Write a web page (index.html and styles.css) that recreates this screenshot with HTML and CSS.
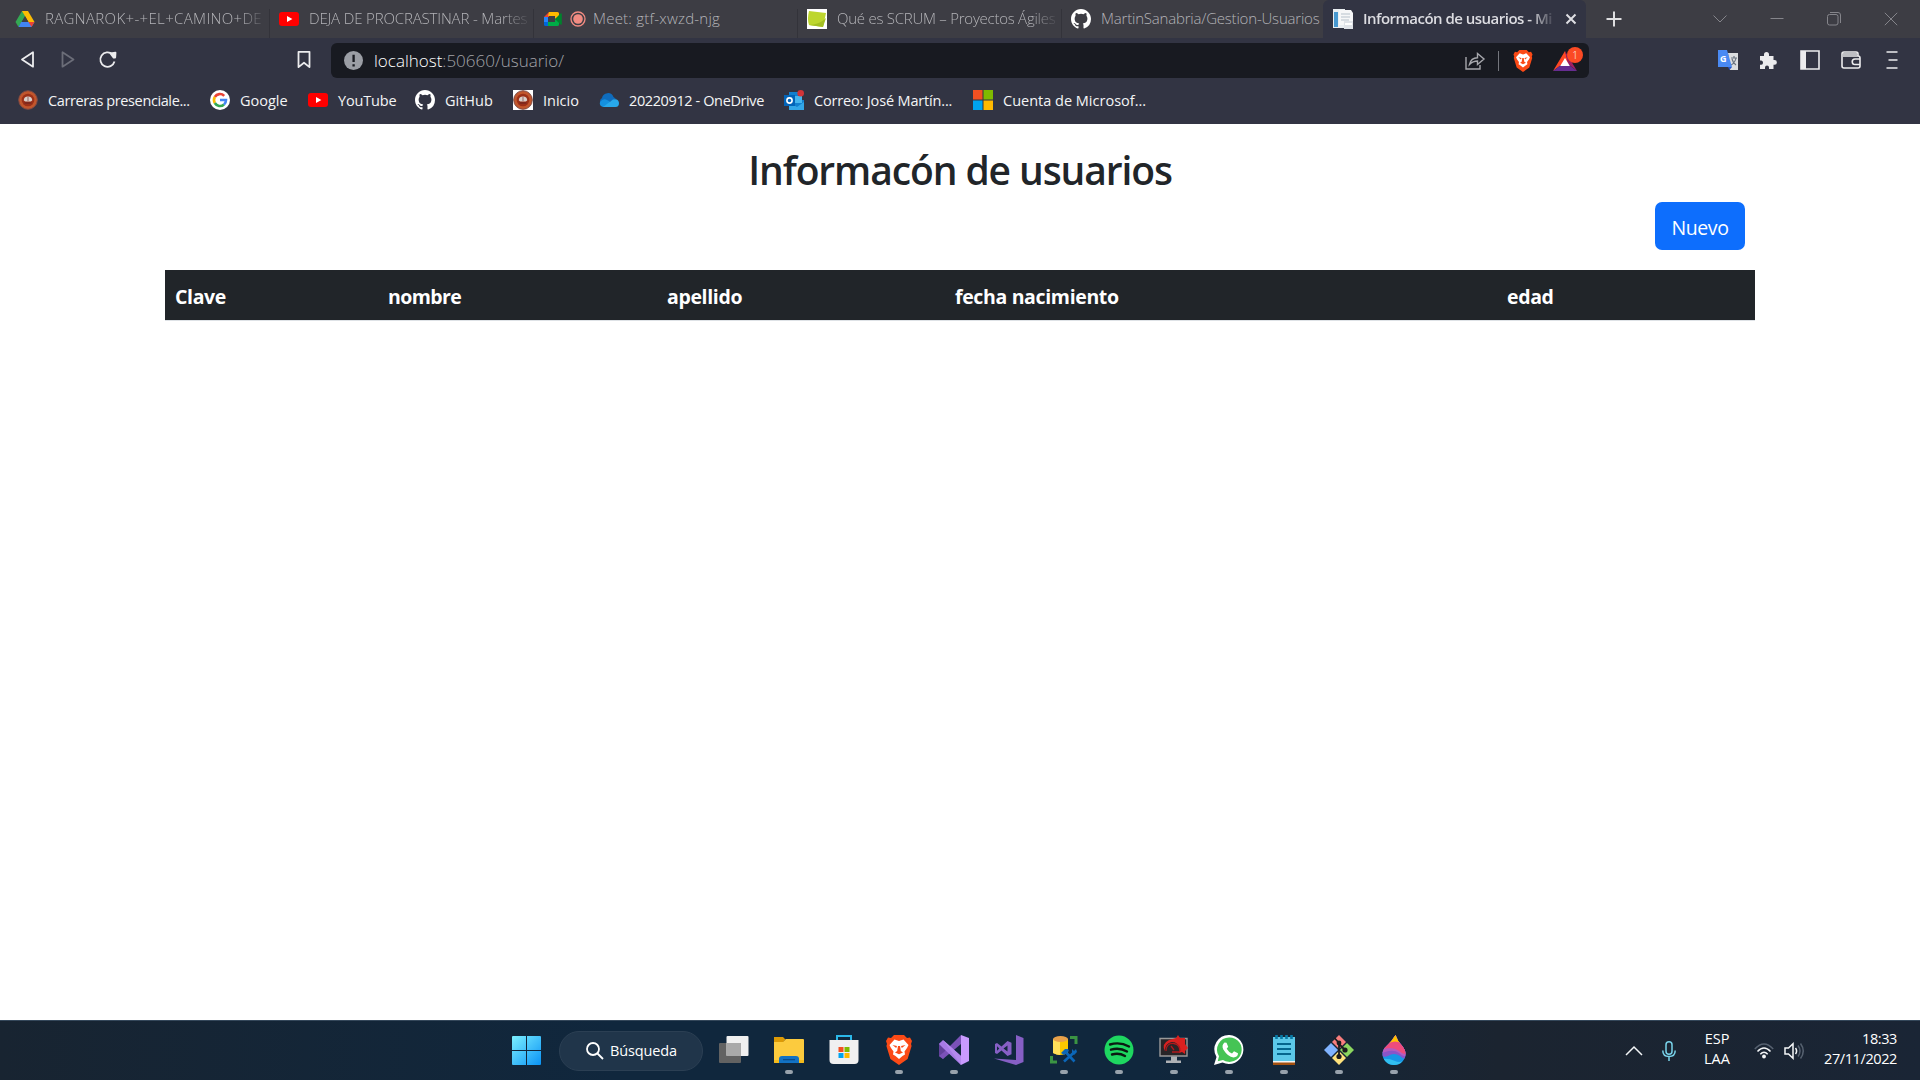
FILE: index.html
```html
<!DOCTYPE html>
<html lang="es">
<head>
<meta charset="utf-8">
<title>Informacón de usuarios</title>
<link rel="stylesheet" href="styles.css">
</head>
<body>
<svg class="defs" aria-hidden="true">
  <symbol id="youtube" viewBox="0 0 20 20"><rect y="3" width="20" height="14" rx="3" fill="#f00"/><path d="M8 7l5.400 3L8 13z" fill="#fff"/></symbol>
  <symbol id="github" viewBox="0 0 16 16"><path fill="#fff" d="M8 0C3.58 0 0 3.58 0 8c0 3.54 2.29 6.53 5.47 7.59.4.07.55-.17.55-.38 0-.19-.01-.82-.01-1.49-2.01.37-2.53-.49-2.69-.94-.09-.23-.48-.94-.82-1.13-.28-.15-.68-.52-.01-.53.63-.01 1.08.58 1.23.82.72 1.21 1.87.87 2.33.66.07-.52.28-.87.51-1.07-1.78-.2-3.64-.89-3.64-3.95 0-.87.31-1.59.82-2.15-.08-.2-.36-1.02.08-2.12 0 0 .67-.21 2.2.82a7.5 7.5 0 0 1 4 0c1.53-1.04 2.2-.82 2.2-.82.44 1.1.16 1.92.08 2.12.51.56.82 1.27.82 2.15 0 3.07-1.87 3.75-3.65 3.95.29.25.54.73.54 1.48 0 1.07-.01 1.93-.01 2.2 0 .21.15.46.55.38A8.01 8.01 0 0 0 16 8c0-4.42-3.58-8-8-8z"/></symbol>
  <symbol id="seal" viewBox="0 0 20 20"><circle cx="10" cy="10" r="9.300" fill="#c2562c" stroke="#7d4a45"/><circle cx="10" cy="10" r="6.300" fill="#9c3018"/><path d="M5.800 10.500q0-4 4.200-4t4.200 4l-1.500 1H7.300z" fill="#d9cfca"/><path d="M6.500 12.500h7v1h-7zM9.700 7h.6v4h-.6z" fill="#622"/></symbol>
  <symbol id="brave" viewBox="0 0 26 30"><path d="M8 0h10l3 3 3-.5L26 6l-1 3 .6 2-4 13L13 30l-8.600-6L.4 11 1 9 0 6l2-3.500L5 3z" fill="#fb4a16"/><path d="M13 6l4.500-1.500 5 5.500-1.500 3-2.500 3.500.5 3-2.500 1.500L13 24l-3.500-3L7 19.500l.5-3L5 13l-1.500-3 5-5.500z" fill="#fff"/><path d="M6.500 10l4.500 1-.8 2zM19.500 10L15 11l.8 2zM12 11h2l.8 5 2.200 1.500L13 19.300l-4-1.800 2.200-1.500z" fill="#fb4a16"/></symbol>
</svg>

<header class="browser">
  <div class="tabstrip">
    <div class="tab">
      <svg class="ico" viewBox="0 0 20 20"><path d="M7 2h6l-6.800 12L3.500 18 .5 13z" fill="#34a853"/><path d="M7 2h6l6.500 11h-6z" fill="#fbbc04"/><path d="M6.200 13h13.300L16.500 18h-13z" fill="#4285f4"/><path d="M13.500 13h6l-3 5z" fill="#ea4335"/><path d="M10 7.200L13.300 13H6.700z" fill="#3d3d44"/></svg>
      <span class="label drive">RAGNAROK+-+EL+CAMINO+DE</span>
    </div>
    <div class="tab">
      <svg class="ico"><use href="#youtube"/></svg>
      <span class="label video">DEJA DE PROCRASTINAR - Martes</span>
    </div>
    <div class="tab">
      <svg class="ico" viewBox="0 0 20 20"><path d="M6 3v5H1z" fill="#ea4335"/><path d="M1 8h4v5H1z" fill="#2684fc"/><path d="M1 13h4v4H2.500Q1 17 1 15.500z" fill="#0066da"/><path d="M6 3h8.500q1.500 0 1.500 1.500V8l-4 2V7H5z" fill="#ffba00"/><path d="M5 13h7v-3l4 2v3.500q0 1.500-1.500 1.500H5z" fill="#00ac47"/><path d="M12 10l5.500-5.500q1.300-.5 1.300.5v10q0 1-1.300.5z" fill="#00832d"/></svg>
      <svg class="rec" viewBox="0 0 16 16"><circle cx="8" cy="8" r="7" fill="none" stroke="#f28b82" stroke-width="1.300"/><circle cx="8" cy="8" r="4.800" fill="#f28b82"/></svg>
      <span class="label meet">Meet: gtf-xwzd-njg</span>
    </div>
    <div class="tab">
      <svg class="ico" viewBox="0 0 20 20"><path d="M0 0h20v20H0z" fill="#fff"/><path d="M2 2l17 2-3 14-14-2q-2-6 0-14z" fill="#bdd62e"/><path d="M2 16q10 0 17-7l-3 9z" fill="#a4bf22"/></svg>
      <span class="label scrum">Qué es SCRUM – Proyectos Ágiles</span>
    </div>
    <div class="tab last">
      <svg class="ico"><use href="#github"/></svg>
      <span class="label repo">MartinSanabria/Gestion-Usuarios</span>
    </div>
    <div class="tab active">
      <svg class="ico" viewBox="0 0 20 20"><path d="M0 0h12v19H0z" fill="#e9eef2"/><path d="M1 3h4v15H1z" fill="#4798d0"/><path d="M6 1h12l2 3v12H6z" fill="#f6f7f8"/><path d="M8 5h9M8 8h9M8 11h8" stroke="#b6c1cb"/><path d="M11 12h9v8h-9z" fill="#dfe3e8"/><path d="M12 14h7v2h-7z" fill="#fff"/></svg>
      <span class="label current">Informacón de usuarios - Mi</span>
      <svg class="close" viewBox="0 0 12 12"><path d="M1.500 1.500l9 9m0-9l-9 9" stroke="#dedee3" stroke-width="2"/></svg>
    </div>
    <svg class="plus" viewBox="0 0 16 16"><path d="M8 .5v15M.5 8h15" stroke="#dedee0" stroke-width="2"/></svg>
    <div class="wincontrols">
      <svg viewBox="0 0 14 14"><path d="M.5 3.500L7 10l6.500-6.500"/></svg>
      <svg viewBox="0 0 14 14"><path d="M.5 6.500h13"/></svg>
      <svg viewBox="0 0 14 14"><rect x=".5" y="2.500" width="10.500" height="10.500" rx="2"/><path d="M3 .5h8q2.500 0 2.500 2.500v8"/></svg>
      <svg viewBox="0 0 14 14"><path d="M.8.800l12.400 12.400m0-12.400L.8 13.200"/></svg>
    </div>
  </div>

  <div class="toolbar">
    <div class="nav">
      <svg viewBox="0 0 18 18"><path d="M14 1.300v14.400L3 8.500z"/></svg>
      <svg class="dim" viewBox="0 0 18 18"><path d="M3.500 1.300v14.400l11-7.200z"/></svg>
      <svg viewBox="0 0 18 18"><path d="M13.500 3.300A7.200 7.200 0 1 0 15.500 10.500"/><path class="fill" d="M11.500 2.500l5-.8-.3 4.800-1.500.2z"/></svg>
    </div>
    <svg class="mark" viewBox="0 0 18 18"><path d="M3.500.800h11v15.300L9 11.800l-5.500 4.300z"/></svg>
    <div class="omnibox">
      <svg class="info" viewBox="0 0 18 18"><circle cx="9" cy="9" r="9" fill="#9b9ea5"/><path d="M8 3.500h2.200v7H8zM8 12.500h2.200v2.200H8z" fill="#181a21"/></svg>
      <span class="url"><b>localhost</b>:50660/usuario/</span>
      <svg class="share" viewBox="0 0 20 18"><path d="M1 5v12h14v-4M4.500 12.500C5.500 8 8 5.700 12.500 5.700V1.500L19 7l-6.500 5.500V9Q8 9 4.500 12.500z"/></svg>
      <i class="bar"></i>
      <svg class="lion"><use href="#brave"/></svg>
      <div class="bat">
        <svg viewBox="0 0 24 20"><path d="M12 0l3.500 12.500L8 14 0 20z" fill="#ff4724"/><path d="M12 0l12 20-9-7z" fill="#9e1f63"/><path d="M0 20l8-6h8l8 6z" fill="#662d91"/><path d="M12 7l4.800 8H7.200z" fill="#fff"/></svg>
        <span class="badge">1</span>
      </div>
    </div>
    <div class="extensions">
      <svg viewBox="0 0 22 22"><path d="M11 4h10v17h-8z" fill="#dcdde0"/><path d="M14 9h6m-3-2v2m2 0q-1 5-5 7m1-6q1 4 4 6" stroke="#6b7480" stroke-width="1.200" fill="none"/><path d="M1 1h9l5 17H1z" fill="#4a8af4"/><path d="M11 18h4l-2.500 3z" fill="#2a56c6"/><text x="3" y="13" class="gletter">G</text></svg>
      <svg viewBox="0 0 22 22"><path d="M2 7h4V5.500a2.500 2.500 0 1 1 5 0V7h4.500v4h1a2.400 2.400 0 1 1 0 4.800h-1V20H11v-1.500a2 2 0 0 0-4 0V20H2v-4.200h1.300a2.200 2.200 0 0 0 0-4.300H2z" fill="#ececee"/></svg>
      <svg viewBox="0 0 22 22"><path d="M2 2h18v18H2z" fill="none" stroke="#ececee" stroke-width="1.600"/><path d="M2 2h5v18H2z" fill="#ececee"/></svg>
      <svg viewBox="0 0 22 22"><path d="M3 7h15q2 0 2 2v8q0 2-2 2H4q-2 0-2-2V5q0-2 2-2h12q2 0 2 2v2M3 5h14M20 10h-5a2.500 2.500 0 0 0 0 5.500h5" fill="none" stroke="#ececee" stroke-width="1.600"/></svg>
      <svg viewBox="0 0 22 22"><path d="M5.500 3h11M7.500 11h9M5.500 19h11" stroke="#ececee" stroke-width="1.700"/></svg>
    </div>
  </div>

  <nav class="bookmarks">
    <a><svg class="ico"><use href="#seal"/></svg><span class="tight">Carreras presenciale...</span></a>
    <a><svg class="ico" viewBox="0 0 20 20"><circle cx="10" cy="10" r="10" fill="#fff"/><g fill="none" stroke-width="2.600"><path d="M14.200 5.800A6 6 0 0 0 4.800 7" stroke="#ea4335"/><path d="M4.800 7a6 6 0 0 0 0 6" stroke="#fbbc04"/><path d="M4.800 13a6 6 0 0 0 9.200 1.500" stroke="#34a853"/><path d="M14 14.500a6 6 0 0 0 2-4.500h-6" stroke="#4285f4"/></g></svg><span>Google</span></a>
    <a><svg class="ico"><use href="#youtube"/></svg><span class="snug">YouTube</span></a>
    <a><svg class="ico"><use href="#github"/></svg><span>GitHub</span></a>
    <a><svg class="ico white"><use href="#seal"/></svg><span>Inicio</span></a>
    <a><svg class="ico" viewBox="0 0 20 20"><path d="M3 15a4 4 0 0 1 0-7 6 6 0 0 1 11.500-1L17 9z" fill="#0f6cbd"/><path d="M4 17q-4-1-3-5 3-4 7-2l9 5-3 2z" fill="#1490df"/><path d="M4 17l10-7.500q5.500-1.500 6 3.500 0 4-3.500 4z" fill="#28a8ea"/></svg><span class="tight">20220912 - OneDrive</span></a>
    <a><svg class="ico" viewBox="0 0 20 20"><path d="M5 2h9v8h6v10H5z" fill="#1280cf"/><path d="M10 6h8v7h-8z" fill="#45b5ee"/><path d="M5 12l8 5 7-5v8H5z" fill="#33a7e8"/><path d="M0 5h11v11H0z" fill="#0364b8"/><circle cx="5.500" cy="10.500" r="2.600" fill="none" stroke="#fff" stroke-width="1.600"/><circle cx="16.700" cy="3.300" r="3.300" fill="#d13438"/></svg><span class="snug">Correo: José Martín...</span></a>
    <a><svg class="ico" viewBox="0 0 20 20"><path d="M0 0h9.500v9.500H0z" fill="#f25022"/><path d="M10.500 0H20v9.500h-9.500z" fill="#7fba00"/><path d="M0 10.500h9.500V20H0z" fill="#00a4ef"/><path d="M10.500 10.500H20V20h-9.500z" fill="#ffb900"/></svg><span>Cuenta de Microsof...</span></a>
  </nav>
</header>

<main class="page">
  <h1>Informacón de usuarios</h1>
  <div class="actions"><button class="btn">Nuevo</button></div>
  <table class="users">
    <thead>
      <tr><th>Clave</th><th class="wide">nombre</th><th>apellido</th><th>fecha nacimiento</th><th>edad</th></tr>
    </thead>
  </table>
</main>

<footer class="taskbar">
  <div class="apps">
    <svg class="start" viewBox="0 0 29 29"><defs><linearGradient id="win" gradientUnits="userSpaceOnUse" x1="0" y1="0" x2="29" y2="29"><stop offset="0" stop-color="#7cf0ff"/><stop offset="1" stop-color="#0a93f5"/></linearGradient></defs><path d="M1 0h13v14H0V1q0-1 1-1zM15 0h13q1 0 1 1v13H15zM0 15h14v14H1q-1 0-1-1zM15 15h14v13q0 1-1 1H15z" fill="url(#win)"/></svg>
    <div class="search"><svg viewBox="0 0 18 18"><circle cx="7" cy="7" r="6"/><path d="M11.500 11.500L17 17"/></svg><span>Búsqueda</span></div>
    <div class="app"><svg viewBox="0 0 30 30"><rect y="8" width="22" height="20" rx="1" fill="#626262"/><rect x="7.500" y="1" width="22" height="20" rx="1" fill="#f0f0f0"/><path d="M7.500 8H22v13H7.500z" fill="#a9a9a9"/></svg></div>
    <div class="app run"><svg viewBox="0 0 30 30"><path d="M0 2h9l3 3h-1l-3 4H0z" fill="#dc9a06"/><path d="M0 7h9l3-3h17q1 0 1 1v22q0 1-1 1H1q-1 0-1-1z" fill="#fccb3e"/><path d="M0 25h30v2q0 1-1 1H1q-1 0-1-1z" fill="#f5bb1c"/><path d="M5 28v-4q0-3 3-3h14q3 0 3 3v4z" fill="#1272c4"/><path d="M9 24h12v1.300H9z" fill="#0a4c8c"/></svg></div>
    <div class="app"><svg viewBox="0 0 30 30"><path d="M8 6V1h14v5" fill="none" stroke="#2bb8e9" stroke-width="2"/><path d="M.5 5h29v20q0 4-4 4h-21q-4 0-4-4z" fill="#f0f0f0"/><path d="M9.500 12h5v5h-5z" fill="#f25022"/><path d="M15.500 12h5v5h-5z" fill="#7fba00"/><path d="M9.500 18h5v5h-5z" fill="#00a4ef"/><path d="M15.500 18h5v5h-5z" fill="#ffb900"/></svg></div>
    <div class="app run"><svg viewBox="0 0 26 30"><use href="#brave" width="26" height="30"/></svg></div>
    <div class="app run"><svg viewBox="0 0 30 30"><path d="M0 8.500L4 6l6 9-6 9-4-3z" fill="#62419a"/><path d="M0 21l4 3L22 9V0L5 17z" fill="#7b52b8"/><path d="M0 9l4-4 18 16v9L4 13z" fill="#a77be6"/><path d="M4 5l18 25v-9z" fill="#b489ee"/><path d="M22 0l8 3v23l-8 4z" fill="#c99aff"/></svg></div>
    <div class="app"><svg viewBox="0 0 30 30"><path d="M22 0l7.500 3v24L22 30 0 23.500l22 1.500z" fill="#865fc5"/><path fill-rule="evenodd" d="M13.500 6l4 1.800v11.400l-4 1.800-6-5.500L3 19l-2-1V9l2-1 4.500 3.500zM13.500 10.500l-4 3 4 3zM3 11.200v4.600l2.300-2.300z" fill="#865fc5"/></svg></div>
    <div class="app run"><svg viewBox="0 0 30 30"><path d="M4 4v14q7 4 15 0V4z" fill="#fcc800"/><path d="M4 4v14q4 2 7 2V4z" fill="#ffe05a"/><ellipse cx="11.500" cy="4" rx="7.500" ry="3" fill="#e8a14a"/><path d="M21 2.500h6V9M2.500 21v6H8" fill="none" stroke="#3b9443" stroke-width="3"/><path d="M15 26.500l10-9m-8 0l8.500 9" fill="none" stroke="#0b66b8" stroke-width="2.600"/><path d="M12 18l4-4h3l1 2-5 4zM23 18v-4l2 2 2-2 1 3-3 3z" fill="#0b66b8"/></svg></div>
    <div class="app run"><svg viewBox="0 0 30 30"><circle cx="15" cy="15" r="14.500" fill="#1ed760"/><path d="M6 9.500q10-3 19 2M7 14.700q8.500-2.500 16 1.800M8 19.500q7-2 13 1.500" fill="none" stroke="#0b1a12" stroke-width="2.400" stroke-linecap="round"/></svg></div>
    <div class="app run"><svg viewBox="0 0 30 30"><path d="M1 3.500h27v17.500H1z" fill="#282528" stroke="#999" stroke-width="1.400"/><path d="M12 21.500h6v4h4v2.500H7v-2.500h5z" fill="#aeb1b5"/><path d="M10 5l7-2 2-3 2 3h5v6l3 4-3 3v3l-3-2-3 1q3-6-3-10-3-2-7 0-4 2-4 8-4-7 4-11z" fill="#d9201f"/><path d="M7 16q0-8 8-7.500 6 1 6 7.500M13 17h8M15 15l-3-4" stroke="#b0191c" stroke-width="1.300" fill="none"/></svg></div>
    <div class="app run"><svg viewBox="0 0 30 30"><path d="M15.500 0a14.500 14.500 0 1 1-7 27.500L0 30l2.500-8A14.500 14.500 0 0 1 15.500 0z" fill="#fff"/><path d="M15.500 2.500a12.200 12.200 0 1 1-6.500 22.500L3.700 26.300 5 21.300A12.200 12.200 0 0 1 15.500 2.500z" fill="#45c455"/><path d="M10.500 7.500l2 .2 1.700 4-1.500 2q2 3.500 5.300 4.800l2-2.200 4 2q0 4-4.500 4.200Q14 22 9.300 14.500q-2-4.500 1.200-7z" fill="#fff"/></svg></div>
    <div class="app run"><svg viewBox="0 0 30 30"><path d="M4 26h22v4H4z" fill="#a3500f"/><path d="M4 25h22v2.500H4z" fill="#f3f3f3"/><path d="M4 2h22v24H4z" fill="#5cc8e8"/><path d="M8 9h14M8 14h14M8 19h14" stroke="#05668d" stroke-width="1.800"/><path d="M7.500 0v4M12.500 0v4M17.500 0v4M22.500 0v4" stroke="#087ba6" stroke-width="2.600"/></svg></div>
    <div class="app run"><svg viewBox="0 0 30 30"><path d="M15 0l7 7-7 7-7-7z" fill="#f77d7d"/><path d="M23 8l7 7-7 7-7-7z" fill="#8bd65f"/><path d="M7 8l7 7-7 7-7-7z" fill="#80b3ff"/><path d="M15 16l7 7-7 7-7-7z" fill="#fee27c"/><path d="M10.500 3l4.500 5v14M15 9l6 6" fill="none" stroke="#1b1b1f" stroke-width="1.800"/><circle cx="15" cy="8" r="2.400" fill="#1b1b1f"/><circle cx="21" cy="15" r="2.600" fill="#1b1b1f"/><circle cx="15" cy="21.500" r="2.600" fill="#1b1b1f"/></svg></div>
    <div class="app run"><svg viewBox="0 0 30 30"><defs><clipPath id="drop"><path d="M16.500 0q2 6 6 10 4 4.500 4 9a11.500 11 0 0 1-23 0q0-4.500 4.500-8.500Q13 6 16.500 0z"/></clipPath></defs><g clip-path="url(#drop)"><path d="M0 0h30v30H0z" fill="#1797e6"/><path d="M0 0h30v25q-6-1-9-4-6-4-12 0-5 2-9-2z" fill="#8a55c8"/><path d="M0 0h30v22q-7 0-10-4-5-4-14-1l-6 2z" fill="#b45cc0"/><path d="M0 0h30v20q-7-1-10-4-6-5-15-2z" fill="#ee4c7c"/><path d="M0 0h30v12q-4-1-8-4-6-3-12 0z" fill="#ffc400"/><path d="M2 24q8-1 14 2 4 2 8 0l-4 6H6z" fill="#31bff0"/></g></svg></div>
  </div>
  <div class="tray">
    <svg class="up" viewBox="0 0 18 10"><path d="M1 9l8-8 8 8"/></svg>
    <svg class="mic" viewBox="0 0 14 20"><rect x="4" y=".7" width="6" height="12.500" rx="3"/><path d="M.8 9.500q0 6 6.200 6t6.200-6M7 15.500V20"/></svg>
    <div class="lang"><span>ESP</span><span>LAA</span></div>
    <svg class="wifi" viewBox="0 0 20 16"><path class="faint" d="M.8 6q9.200-10 18.400 0"/><path d="M3.500 8.500q6.500-7 13 0M6.300 11.200q3.700-4 7.400 0"/><circle cx="10" cy="13.500" r="1.900"/></svg>
    <svg class="vol" viewBox="0 0 20 18"><path d="M1 6h3.500L9 1.800v14.400L4.500 12H1zM11.500 6q2.200 3 0 6"/><path class="faint" d="M14 3.500q4 5.500 0 11M16.500 1.500q5.500 7.500 0 15"/></svg>
    <div class="clock"><span>18:33</span><span>27/11/2022</span></div>
  </div>
</footer>
</body>
</html>
```
FILE: styles.css
```css
* { box-sizing: border-box; }
body { margin: 0; height: 1080px; overflow: hidden; display: flex; flex-direction: column; background: #fff; font-family: "Open Sans", "Noto Sans", sans-serif; color: #212529; }
svg { flex: none; display: block; overflow: visible; }
.defs { display: none; }
.ico { width: 20px; height: 20px; }
.white { background: #fff; }

.browser { height: 124px; background: #323443; flex: none; }
.tabstrip { height: 38px; padding-left: 6px; display: flex; background: #3d3d44; font-size: 15px; font-weight: 300; color: #b4b4b8; }
.tab { width: 264px; height: 38px; padding-left: 9px; display: flex; align-items: center; white-space: nowrap; background: linear-gradient(#33333a, #33333a) right bottom / 1px 29px no-repeat; }
.tab .label { margin: 0 0 2px 10px; width: 220px; overflow: hidden; mask-image: linear-gradient(90deg, #000 88%, rgba(0, 0, 0, .1)); }
.tab .rec { width: 16px; height: 16px; margin-left: 7px; }
.tab .meet { margin-left: 7px; width: 180px; letter-spacing: .22px; mask-image: none; }
.tab .drive { letter-spacing: .35px; }
.tab .video { letter-spacing: -.15px; }
.tab .scrum { letter-spacing: -.25px; }
.tab .repo { letter-spacing: -.2px; mask-image: none; }
.tab.last { width: 261px; background: none; }
.tab.active { width: 263px; padding-left: 10px; background: #323443; border-radius: 6px 6px 0 0; color: #dcdce1; font-weight: 600; }
.tab.active .label { width: 190px; letter-spacing: -.52px; }
.close { width: 12px; height: 12px; margin-left: 12px; }
.plus { width: 16px; height: 16px; margin: 11px 0 0 20px; }
.wincontrols { margin: 12px 22px 0 auto; display: flex; gap: 43px; }
.wincontrols svg { width: 14px; height: 14px; fill: none; stroke: #85858b; }

.toolbar { height: 45px; padding-top: 5px; display: flex; }
.nav { display: flex; gap: 22px; margin: 8px 0 0 19px; width: 276px; }
.nav svg, .mark { width: 18px; height: 18px; fill: none; stroke: #ececee; stroke-width: 1.8; stroke-linejoin: round; }
.nav .dim { stroke: #6b6d78; }
.nav .fill { fill: #ececee; }
.mark { margin-top: 8px; }
.omnibox { margin-left: 18px; width: 1258px; height: 35px; padding-left: 13px; border-radius: 6px; background: #181a21; display: flex; align-items: center; font-size: 17px; font-weight: 300; color: #a2a3a8; }
.info { width: 19px; height: 19px; }
.url { margin-left: 11px; width: 1091px; }
.url b { font-weight: 300; color: #fff; }
.share { width: 20px; height: 18px; fill: none; stroke: #a7a8ad; stroke-width: 1.4; }
.bar { width: 1px; height: 20px; margin-left: 13px; background: #74767d; }
.lion { width: 20px; height: 22px; margin-left: 14px; }
.bat { position: relative; width: 24px; height: 20px; margin-left: 20px; }
.bat svg { width: 24px; height: 20px; }
.badge { position: absolute; left: 14px; top: -4px; width: 16px; height: 16px; border-radius: 50%; background: #fb4a24; color: #fff; font-size: 10px; line-height: 16px; text-align: center; }
.extensions { display: flex; gap: 19px; margin: 6px 0 0 128px; }
.extensions svg { width: 22px; height: 22px; }
.gletter { font: 700 9px "Open Sans", sans-serif; fill: #fff; }

.bookmarks { height: 36px; padding: 0 0 2px 18px; display: grid; grid-template-columns: 192px 98px 107px 98px 86px 185px 189px 180px; align-items: center; font-size: 14.5px; color: #f4f4f6; }
.bookmarks a { display: flex; align-items: center; gap: 10px; white-space: nowrap; }
.tight { letter-spacing: -.39px; }
.snug { letter-spacing: -.16px; }

.page { flex: 1; padding: 0 165px; }
h1 { margin: 0; padding-top: 16px; font-size: 39px; line-height: 60px; font-weight: 600; letter-spacing: -1.1px; text-align: center; }
.actions { display: flex; justify-content: flex-end; padding: 2px 10px 20px 0; }
.btn { width: 90px; height: 48px; border: 0; border-radius: 7px; background: #0d6efd; color: #fff; font: 19.5px "Open Sans", sans-serif; letter-spacing: -.4px; padding: 3px 0 0; }
.users { width: 1590px; table-layout: fixed; border-collapse: collapse; background: #212529; color: #fff; border-bottom: 1px solid #dee2e6; }
.users th { height: 50px; padding: 4px 0 0 10px; text-align: left; font-size: 19.5px; line-height: 30px; font-weight: 700; letter-spacing: -.35px; }
.users .wide { letter-spacing: -.6px; }
.users th:nth-child(1) { width: 213px; }
.users th:nth-child(2) { width: 279px; }
.users th:nth-child(3) { width: 288px; }
.users th:nth-child(4) { width: 552px; }

.taskbar { flex: none; height: 60px; border-top: 1px solid #34475a; display: flex; background: linear-gradient(90deg, #182431, #10273d 32%, #10273d 60%, #1b2430 78%, #1a2535); color: #fff; }
.apps { display: flex; align-items: center; margin-left: 512px; }
.start { width: 29px; height: 29px; }
.search { width: 144px; height: 40px; margin: 0 3px 0 18px; padding-left: 26px; border: 1px solid #2b3f53; border-radius: 20px; background: #20354a; display: flex; align-items: center; gap: 6px; font-size: 14.5px; letter-spacing: -.15px; }
.search span { padding-bottom: 1px; }
.search svg { width: 18px; height: 18px; fill: none; stroke: #fff; stroke-width: 1.8; }
.app { width: 55px; height: 59px; padding-top: 14px; display: flex; flex-direction: column; align-items: center; }
.app svg { width: 30px; height: 30px; }
.run::after { content: ""; width: 8px; height: 4px; margin-top: 5px; border-radius: 2px; background: #98a2ac; }
.tray { margin-left: auto; padding-right: 23px; display: flex; align-items: center; font-size: 14.5px; line-height: 20px; }
.tray svg { fill: none; stroke: #f4f6f8; stroke-width: 1.5; }
.tray .up { width: 18px; height: 10px; margin-right: 19px; }
.tray .mic { width: 14px; height: 20px; stroke: #79d3ea; margin-right: 26px; }
.lang, .clock { display: flex; flex-direction: column; white-space: nowrap; padding-bottom: 3px; }
.lang { width: 30px; align-items: center; margin-right: 22px; }
.tray .wifi { width: 20px; height: 16px; margin-right: 10px; }
.wifi circle { fill: #f4f6f8; stroke: none; }
.tray .vol { width: 20px; height: 18px; margin-right: 20px; }
.tray .faint { stroke: #566170; }
.clock { width: 73px; align-items: flex-end; letter-spacing: -.4px; }
```
